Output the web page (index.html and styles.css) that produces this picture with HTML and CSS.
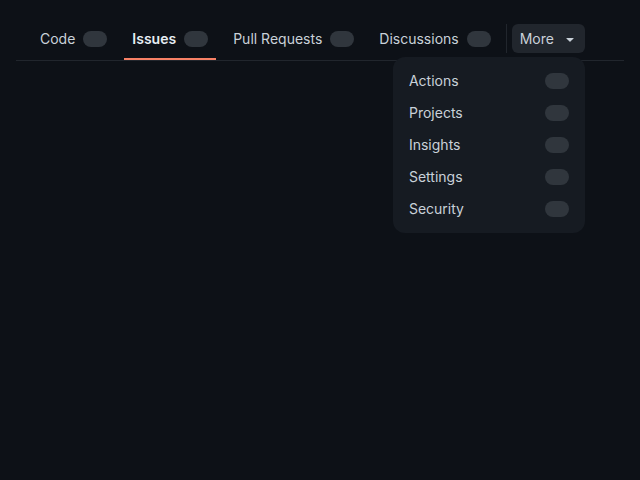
FILE: index.html
```html
<!DOCTYPE html>
<html>
<head>
<meta charset="utf-8">
<link rel="stylesheet" href="styles.css">
</head>
<body>
<div class="page">
  <nav class="tabs">
    <a class="tab"><span class="label">Code</span><span class="pill"></span></a>
    <a class="tab active"><span class="label">Issues</span><span class="pill"></span></a>
    <a class="tab"><span class="label">Pull Requests</span><span class="pill"></span></a>
    <a class="tab"><span class="label">Discussions</span><span class="pill"></span></a>
    <span class="sep"></span>
    <div class="more-wrap">
      <button class="more">More
        <svg class="caret" width="16" height="16" viewBox="0 0 16 16"><path fill="currentColor" d="m4.427 7.427 3.396 3.396a.25.25 0 0 0 .354 0l3.396-3.396A.25.25 0 0 0 11.396 7H4.604a.25.25 0 0 0-.177.427Z"/></svg>
      </button>
      <ul class="menu">
        <li class="item"><span>Actions</span><span class="pill"></span></li>
        <li class="item"><span>Projects</span><span class="pill"></span></li>
        <li class="item"><span>Insights</span><span class="pill"></span></li>
        <li class="item"><span>Settings</span><span class="pill"></span></li>
        <li class="item"><span>Security</span><span class="pill"></span></li>
      </ul>
    </div>
  </nav>
</div>
</body>
</html>
```

FILE: styles.css
```css
html, body {
  margin: 0;
  padding: 0;
  background: #0d1117;
  height: 100%;
}
body {
  font-family: Inter, "Noto Sans", sans-serif;
  font-size: 14px;
  color: #c9d1d9;
}
.page {
  padding: 16px;
}
.tabs {
  display: flex;
  align-items: flex-start;
  gap: 9px;
  padding: 8px 16px 0;
  border-bottom: 1px solid #21262d;
}
.tab {
  display: flex;
  align-items: center;
  gap: 8px;
  height: 36px;
  box-sizing: border-box;
  padding: 0 8px 5px;
  border-bottom: 2px solid transparent;
  color: #c9d1d9;
}
.tab.active {
  border-bottom-color: #f78166;
  font-weight: 600;
  color: #e6edf3;
}
.pill {
  display: block;
  width: 24px;
  height: 16px;
  border-radius: 8px;
  background: #30363d;
}
.tab .pill {
  margin-top: 1px;
}
.sep {
  width: 1px;
  height: 29px;
  background: #21262d;
  margin-left: -2px;
}
.more-wrap {
  position: relative;
  margin-left: -4px;
}
.more {
  display: flex;
  align-items: center;
  gap: 8px;
  height: 29px;
  padding: 0 7px 1px 8px;
  border: none;
  border-radius: 6px;
  background: #21262d;
  color: #c9d1d9;
  font: inherit;
}
.caret {
  display: block;
  color: #c9d1d9;
  margin-top: 1px;
}
.menu {
  position: absolute;
  right: 0;
  top: 33px;
  width: 192px;
  box-sizing: border-box;
  margin: 0;
  padding: 8px 16px;
  list-style: none;
  background: #161b22;
  border-radius: 12px;
}
.item {
  display: flex;
  align-items: center;
  justify-content: space-between;
  height: 32px;
  box-sizing: border-box;
  padding-bottom: 2px;
}
.item .pill {
  margin-top: 2px;
}
```
